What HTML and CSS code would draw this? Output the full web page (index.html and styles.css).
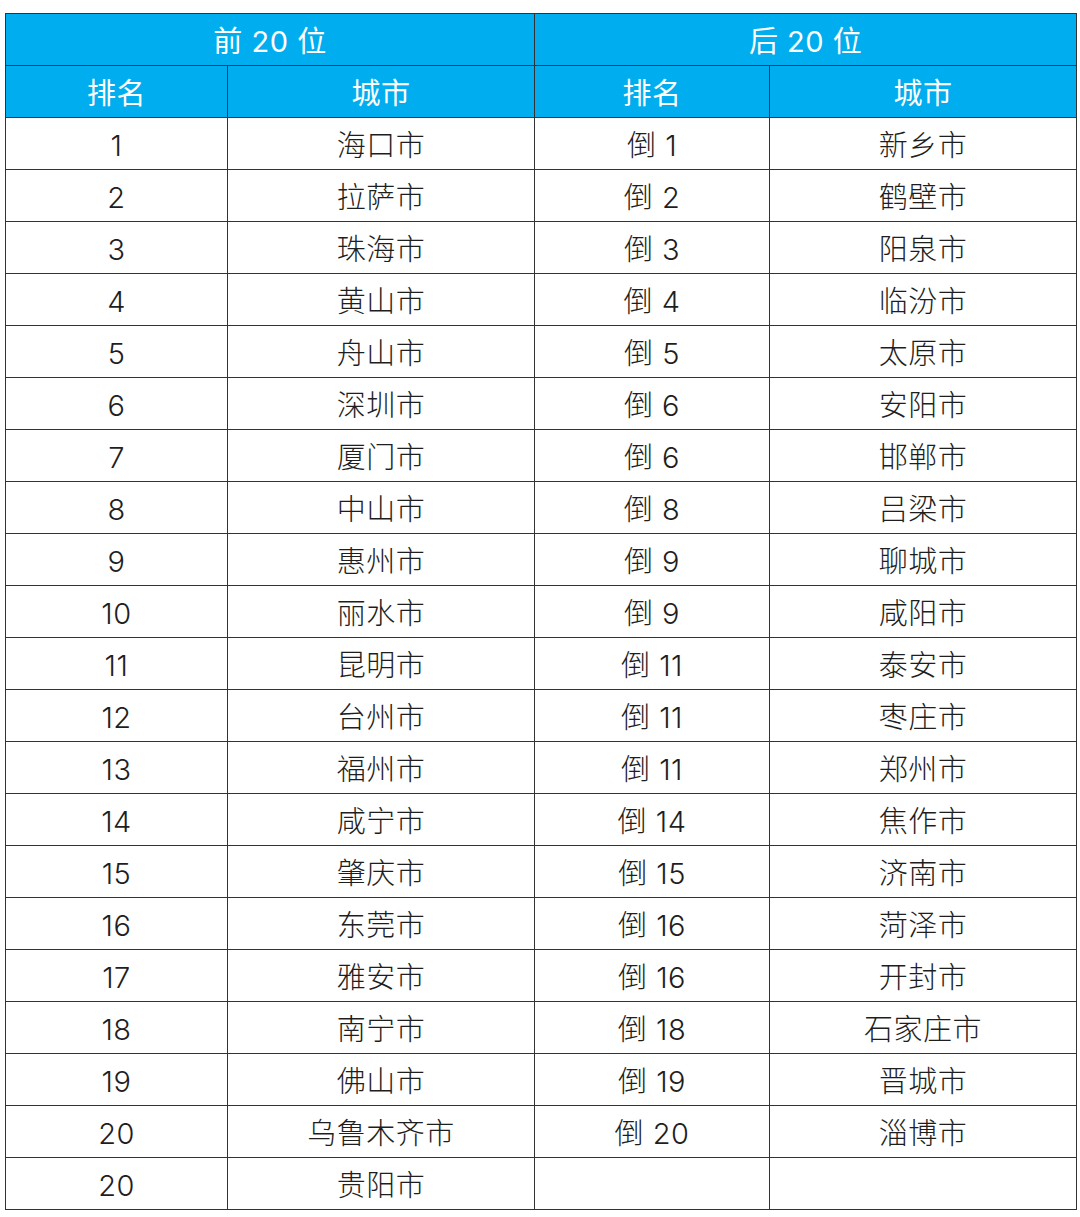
FILE: index.html
```html
<!DOCTYPE html>
<html lang="zh-CN">
<head>
<meta charset="utf-8">
<title>排名</title>
<link rel="stylesheet" href="styles.css">
</head>
<body>
<table class="rank">
  <colgroup>
    <col class="c1"><col class="c2"><col class="c3"><col class="c4">
  </colgroup>
  <thead>
    <tr class="h1"><th colspan="2">前 20 位</th><th colspan="2">后 20 位</th></tr>
    <tr class="h2"><th>排名</th><th>城市</th><th>排名</th><th>城市</th></tr>
  </thead>
  <tbody>
    <tr><td>1</td><td>海口市</td><td>倒 1</td><td>新乡市</td></tr>
    <tr><td>2</td><td>拉萨市</td><td>倒 2</td><td>鹤壁市</td></tr>
    <tr><td>3</td><td>珠海市</td><td>倒 3</td><td>阳泉市</td></tr>
    <tr><td>4</td><td>黄山市</td><td>倒 4</td><td>临汾市</td></tr>
    <tr><td>5</td><td>舟山市</td><td>倒 5</td><td>太原市</td></tr>
    <tr><td>6</td><td>深圳市</td><td>倒 6</td><td>安阳市</td></tr>
    <tr><td>7</td><td>厦门市</td><td>倒 6</td><td>邯郸市</td></tr>
    <tr><td>8</td><td>中山市</td><td>倒 8</td><td>吕梁市</td></tr>
    <tr><td>9</td><td>惠州市</td><td>倒 9</td><td>聊城市</td></tr>
    <tr><td>10</td><td>丽水市</td><td>倒 9</td><td>咸阳市</td></tr>
    <tr><td>11</td><td>昆明市</td><td>倒 11</td><td>泰安市</td></tr>
    <tr><td>12</td><td>台州市</td><td>倒 11</td><td>枣庄市</td></tr>
    <tr><td>13</td><td>福州市</td><td>倒 11</td><td>郑州市</td></tr>
    <tr><td>14</td><td>咸宁市</td><td>倒 14</td><td>焦作市</td></tr>
    <tr><td>15</td><td>肇庆市</td><td>倒 15</td><td>济南市</td></tr>
    <tr><td>16</td><td>东莞市</td><td>倒 16</td><td>菏泽市</td></tr>
    <tr><td>17</td><td>雅安市</td><td>倒 16</td><td>开封市</td></tr>
    <tr><td>18</td><td>南宁市</td><td>倒 18</td><td>石家庄市</td></tr>
    <tr><td>19</td><td>佛山市</td><td>倒 19</td><td>晋城市</td></tr>
    <tr><td>20</td><td>乌鲁木齐市</td><td>倒 20</td><td>淄博市</td></tr>
    <tr><td>20</td><td>贵阳市</td><td></td><td></td></tr>
  </tbody>
</table>
</body>
</html>
```
FILE: styles.css
```css
html, body {
  margin: 0;
  padding: 0;
  background: #ffffff;
}
body {
  padding: 13px 0 0 5px;
  font-family: "Inter", "Noto Sans CJK SC", "Noto Sans", sans-serif;
}
.rank {
  border-collapse: collapse;
  table-layout: fixed;
  width: 1071px;
}
.c1 { width: 222px; }
.c2 { width: 307px; }
.c3 { width: 235px; }
.c4 { width: 307px; }
.rank th, .rank td {
  border: 1px solid #333333;
  height: 52px;
  padding: 3px 0 0 0;
  box-sizing: border-box;
  text-align: center;
  vertical-align: middle;
  font-size: 29px;
  font-weight: 300;
  line-height: 1;
  letter-spacing: 0.5px;
}
.rank th {
  background: #00aeef;
  color: #ffffff;
  font-weight: 400;
}
.rank td {
  color: #1e1e1e;
}
```
